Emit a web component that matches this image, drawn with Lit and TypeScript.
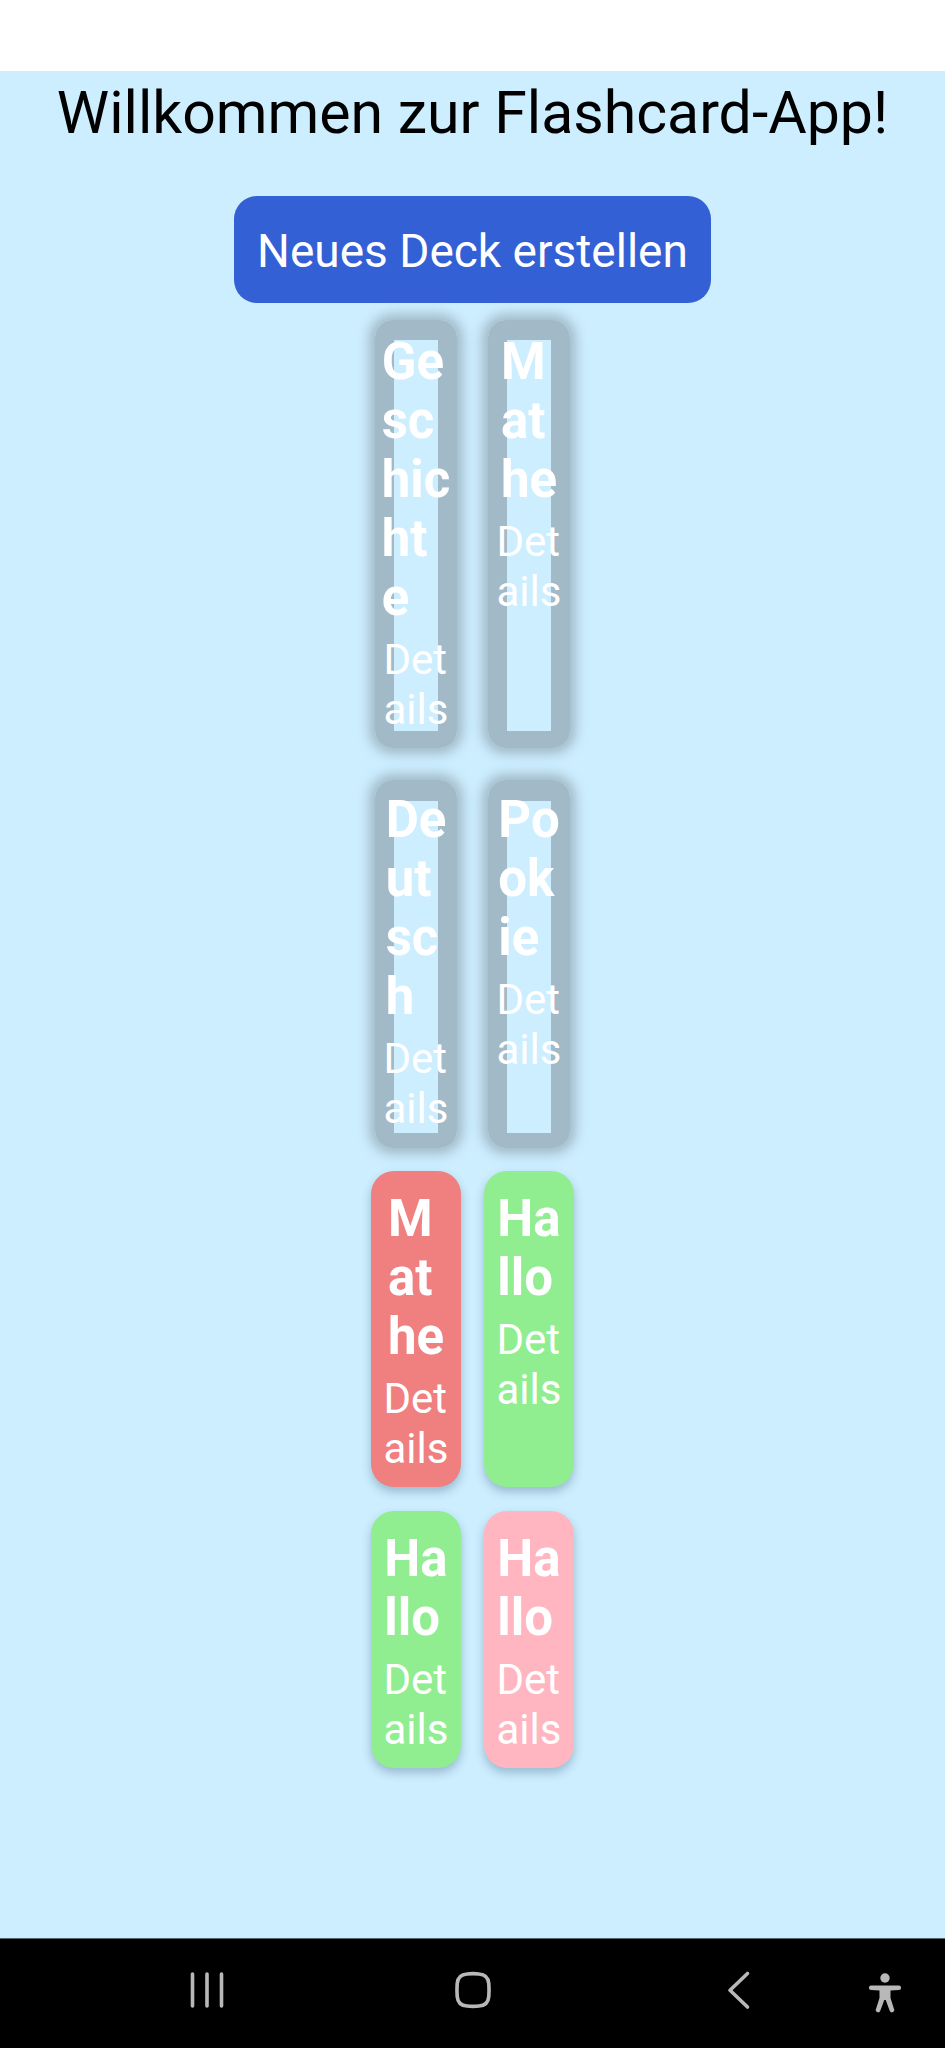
import { LitElement, html, css } from "lit";
import { customElement, property } from "lit/decorators.js";
import { classMap } from "lit/directives/class-map.js";

type Tone = "near" | "far" | "coral" | "green" | "pink";

interface Deck {
  name: string[];
  tone: Tone;
}

const DECKS: Deck[] = [
  { name: ["Ge", "sc", "hic", "ht", "e"], tone: "near" },
  { name: ["M", "at", "he"], tone: "near" },
  { name: ["De", "ut", "sc", "h"], tone: "far" },
  { name: ["Po", "ok", "ie"], tone: "far" },
  { name: ["M", "at", "he"], tone: "coral" },
  { name: ["Ha", "llo"], tone: "green" },
  { name: ["Ha", "llo"], tone: "green" },
  { name: ["Ha", "llo"], tone: "pink" },
];

// Joins syllables with soft break points so the word stays whole in the text.
const breakable = (parts: string[]) =>
  parts.map((part, i) => (i ? html`<wbr />${part}` : html`${part}`));

@customElement("deck-card")
export class DeckCard extends LitElement {
  @property({ attribute: false }) name: string[] = [];
  @property() tone: Tone = "green";

  static styles = css`
    :host {
      display: grid;
    }
    .card {
      position: relative;
      display: flex;
      flex-direction: column;
      align-items: center;
      padding: 18px 10px 13px;
      border-radius: 23px;
      color: #fff;
    }
    .coral,
    .green,
    .pink {
      box-shadow: 0 5px 10px rgba(40, 70, 100, 0.3);
    }
    .coral {
      background: #f08080;
    }
    .green {
      background: #90ee90;
    }
    .pink {
      background: #ffb6c1;
    }
    /* Decks without a colour show only the ring of their shadow. */
    .near::before,
    .far::before {
      content: "";
      position: absolute;
      inset: 6px 4px 0;
      border: solid #a2bac8;
      border-width: 20px 19px 17px;
      border-radius: 18px;
      box-shadow: 0 0 12px 6px #a2bac8;
    }
    .far::before {
      inset: 8px 4px -1px;
      border-width: 21px 19px 15px;
    }
    .name,
    .details {
      position: relative;
      width: min-content;
      margin: 0;
      text-align: left;
    }
    .name {
      margin-bottom: 8px;
      font-size: 51px;
      line-height: 59px;
      font-weight: 700;
    }
    .details {
      padding: 0;
      border: 0;
      background: none;
      color: inherit;
      font: inherit;
      font-size: 42px;
      line-height: 50px;
      cursor: pointer;
    }
  `;

  render() {
    return html`<article class=${classMap({ card: true, [this.tone]: true })}>
      <h2 class="name">${breakable(this.name)}</h2>
      <button class="details" type="button">${breakable(["Det", "ails"])}</button>
    </article>`;
  }
}

@customElement("app-root")
export class AppRoot extends LitElement {
  static styles = css`
    :host {
      display: flex;
      flex-direction: column;
      min-height: 100vh;
      background: #cceeff;
      font-family: Roboto, "Liberation Sans", sans-serif;
    }
    .status {
      height: 71px;
      background: #fff;
    }
    main {
      flex: 1;
      display: flex;
      flex-direction: column;
      align-items: center;
      padding: 8px 24px 24px;
    }
    .title {
      margin: 0 0 49px;
      color: #000;
      font-size: 59px;
      line-height: 68px;
      font-weight: 400;
      text-align: center;
    }
    .create {
      margin: 0 0 11px;
      padding: 28px 23px 25px;
      border: 0;
      border-radius: 23px;
      background: #3460d5;
      color: #fff;
      font: inherit;
      font-size: 46px;
      line-height: 54px;
      cursor: pointer;
    }
    .decks {
      display: grid;
      grid-template-columns: repeat(2, 90px);
      gap: 24px 23px;
    }
    .nav {
      display: flex;
      align-items: center;
      box-sizing: border-box;
      height: 110px;
      padding: 0 3.5% 5px 19%;
      border-top: 1px solid #56646b;
      background: #000;
    }
    .keys {
      flex: 1;
      display: flex;
      justify-content: space-between;
      margin-right: 12.5%;
    }
    .key {
      display: grid;
      place-items: center;
      width: 54px;
      height: 54px;
      padding: 0;
      border: 0;
      background: none;
      color: #b8b8b8;
      cursor: pointer;
    }
    .icon {
      width: 44px;
      height: 44px;
      fill: none;
      stroke: currentColor;
      stroke-width: 3.6;
      stroke-linecap: round;
      stroke-linejoin: round;
    }
    .solid {
      fill: currentColor;
      stroke: none;
    }
  `;

  render() {
    return html`
      <div class="status"></div>
      <main>
        <h1 class="title">Willkommen zur Flashcard-App!</h1>
        <button class="create" type="button">Neues Deck erstellen</button>
        <section class="decks">
          ${DECKS.map((d) => html`<deck-card .name=${d.name} tone=${d.tone}></deck-card>`)}
        </section>
      </main>
      <nav class="nav">
        <div class="keys">
          <button class="key" type="button" aria-label="Letzte Apps">
            <svg class="icon" viewBox="0 0 44 44">
              <path d="M7.5 5V37M22 5V37M36.5 5V37" />
            </svg>
          </button>
          <button class="key" type="button" aria-label="Startseite">
            <svg class="icon" viewBox="0 0 44 44">
              <path
                d="M16 5Q22 4.300 28 5Q37 5.500 37.800 14.500Q38.300 21 37.800 27.500Q37 36.500 28 37Q22 37.700 16 37Q7 36.500 6.200 27.500Q5.700 21 6.200 14.500Q7 5.500 16 5Z"
              />
            </svg>
          </button>
          <button class="key" type="button" aria-label="Zurück">
            <svg class="icon" viewBox="0 0 44 44">
              <path d="M30.500 4.500L13 21.200L30.500 38" />
            </svg>
          </button>
        </div>
        <button class="key" type="button" aria-label="Bedienungshilfen">
          <svg class="icon solid" viewBox="0 0 44 44">
            <circle cx="22" cy="9" r="4.700" />
            <path
              d="M8.200 16.500H35.800A2.300 2.300 0 0 1 35.800 21.100L27.500 21.500V29L31 40A2.200 2.200 0 0 1 26.800 42L22.700 31H21.300L17.200 42A2.200 2.200 0 0 1 13 40L16.500 29V21.500L8.200 21.100A2.300 2.300 0 0 1 8.200 16.500Z"
            />
          </svg>
        </button>
      </nav>
    `;
  }
}
